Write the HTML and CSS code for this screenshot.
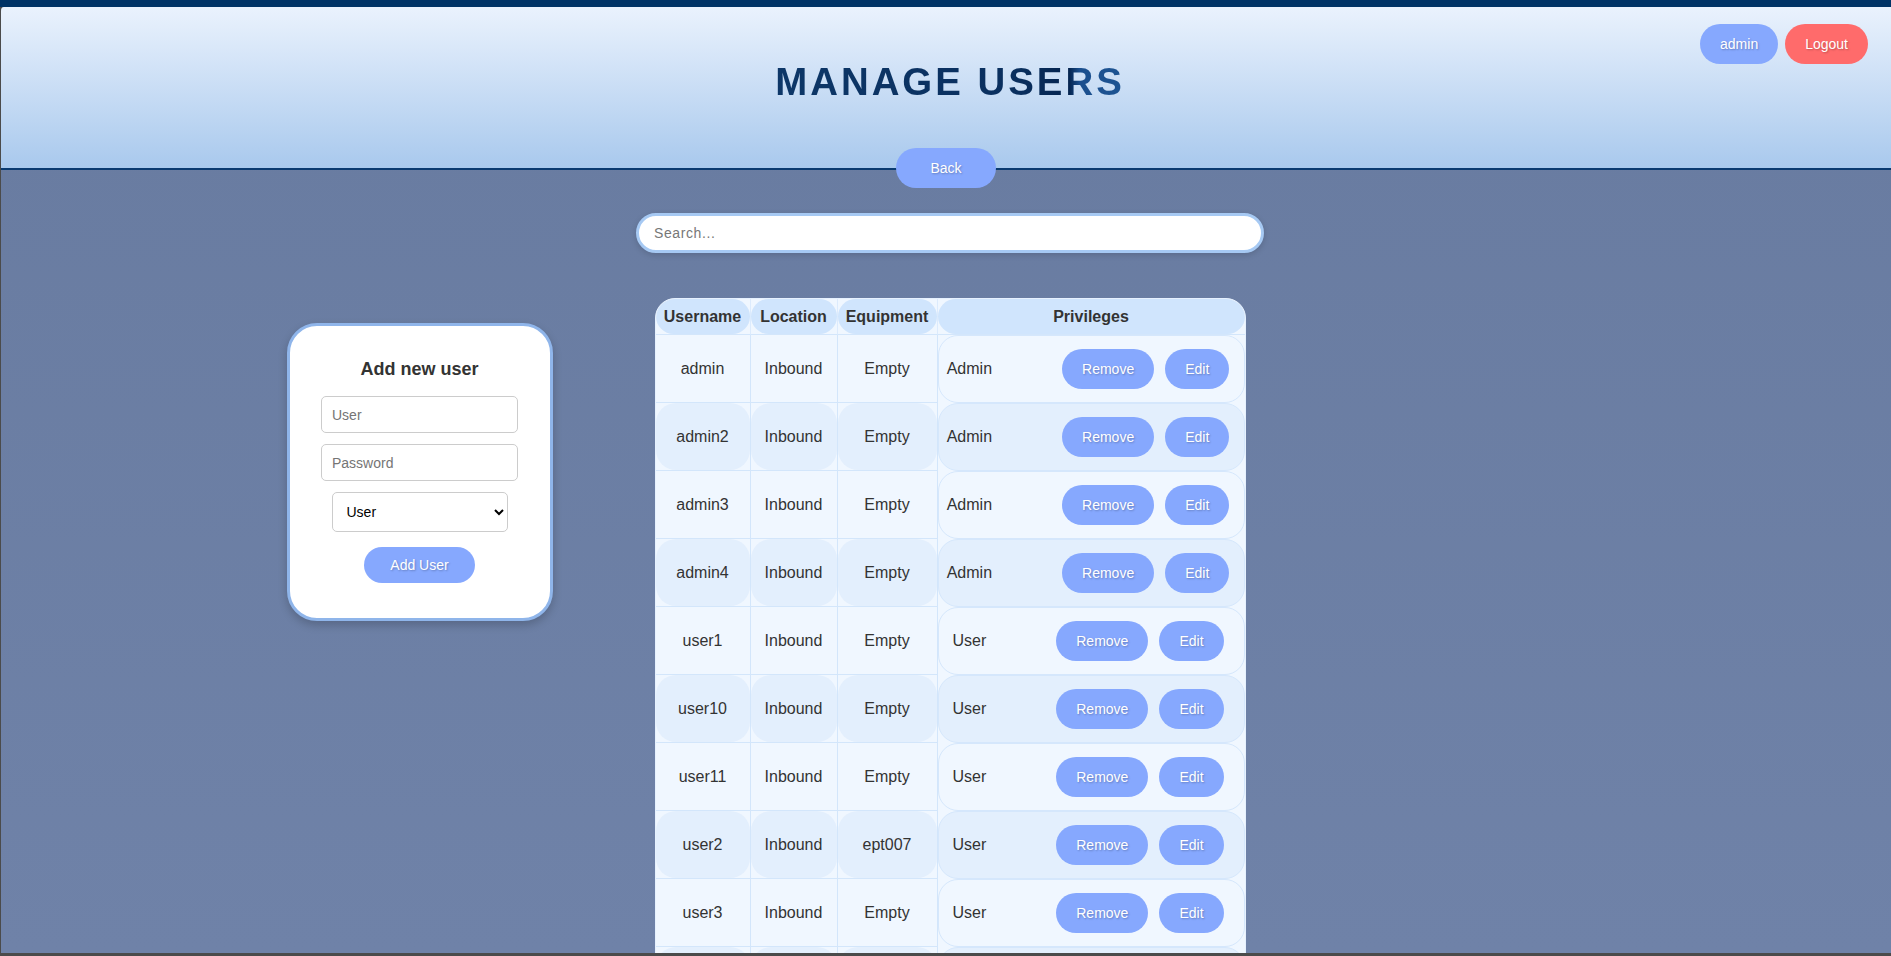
FILE: index.html
```html
<!DOCTYPE html>
<html lang="en">
<head>
<meta charset="utf-8">
<title>Manage Users</title>
<link rel="stylesheet" href="styles.css">
</head>
<body>
<div class="topbar"></div>
<div class="window">
  <header class="header">
    <h1 class="title"><span class="title-text">MANAGE USERS</span></h1>
    <div class="user-menu">
      <button class="pill blue">admin</button>
      <button class="pill red">Logout</button>
    </div>
  </header>
  <div class="back-row"><button class="pill blue back">Back</button></div>
  <div class="search-row"><input class="search" type="text" placeholder="Search..."></div>
  <div class="content">
    <form class="card">
      <h2 class="card-title">Add new user</h2>
      <input class="field" type="text" placeholder="User">
      <input class="field" type="password" placeholder="Password">
      <select class="role-select"><option>User</option><option>Admin</option></select>
      <button type="button" class="pill blue add">Add User</button>
    </form>
    <div class="table-wrap">
      <table class="users">
        <colgroup><col class="c-user"><col class="c-loc"><col class="c-eq"><col></colgroup>
        <thead>
          <tr>
            <th><div class="th-in">Username</div></th>
            <th><div class="th-in">Location</div></th>
            <th><div class="th-in">Equipment</div></th>
            <th><div class="th-in">Privileges</div></th>
          </tr>
        </thead>
        <tbody>
          <tr><td><div class="cell">admin</div></td><td><div class="cell">Inbound</div></td><td><div class="cell">Empty</div></td><td class="priv-td"><div class="priv"><span class="role">Admin</span><button class="pill blue">Remove</button><button class="pill blue edit">Edit</button></div></td></tr>
          <tr><td><div class="cell">admin2</div></td><td><div class="cell">Inbound</div></td><td><div class="cell">Empty</div></td><td class="priv-td"><div class="priv"><span class="role">Admin</span><button class="pill blue">Remove</button><button class="pill blue edit">Edit</button></div></td></tr>
          <tr><td><div class="cell">admin3</div></td><td><div class="cell">Inbound</div></td><td><div class="cell">Empty</div></td><td class="priv-td"><div class="priv"><span class="role">Admin</span><button class="pill blue">Remove</button><button class="pill blue edit">Edit</button></div></td></tr>
          <tr><td><div class="cell">admin4</div></td><td><div class="cell">Inbound</div></td><td><div class="cell">Empty</div></td><td class="priv-td"><div class="priv"><span class="role">Admin</span><button class="pill blue">Remove</button><button class="pill blue edit">Edit</button></div></td></tr>
          <tr><td><div class="cell">user1</div></td><td><div class="cell">Inbound</div></td><td><div class="cell">Empty</div></td><td class="priv-td"><div class="priv"><span class="role">User</span><button class="pill blue">Remove</button><button class="pill blue edit">Edit</button></div></td></tr>
          <tr><td><div class="cell">user10</div></td><td><div class="cell">Inbound</div></td><td><div class="cell">Empty</div></td><td class="priv-td"><div class="priv"><span class="role">User</span><button class="pill blue">Remove</button><button class="pill blue edit">Edit</button></div></td></tr>
          <tr><td><div class="cell">user11</div></td><td><div class="cell">Inbound</div></td><td><div class="cell">Empty</div></td><td class="priv-td"><div class="priv"><span class="role">User</span><button class="pill blue">Remove</button><button class="pill blue edit">Edit</button></div></td></tr>
          <tr><td><div class="cell">user2</div></td><td><div class="cell">Inbound</div></td><td><div class="cell">ept007</div></td><td class="priv-td"><div class="priv"><span class="role">User</span><button class="pill blue">Remove</button><button class="pill blue edit">Edit</button></div></td></tr>
          <tr><td><div class="cell">user3</div></td><td><div class="cell">Inbound</div></td><td><div class="cell">Empty</div></td><td class="priv-td"><div class="priv"><span class="role">User</span><button class="pill blue">Remove</button><button class="pill blue edit">Edit</button></div></td></tr>
          <tr><td><div class="cell"></div></td><td><div class="cell"></div></td><td><div class="cell"></div></td><td class="priv-td"><div class="priv"></div></td></tr>
        </tbody>
      </table>
    </div>
    <div class="spacer"></div>
  </div>
</div>
</body>
</html>
```
FILE: styles.css
```css
html, body {
  margin: 0;
  padding: 0;
}

body {
  font-family: "Liberation Sans", Arial, sans-serif;
  background: #4b4b4b;
  overflow: hidden;
}

.topbar {
  height: 7px;
  background: #003366;
}

.window {
  height: 949px;
  box-sizing: border-box;
  border-left: 1px solid #4b4b4b;
  border-bottom: 3px solid #4b4b4b;
  border-top-left-radius: 4px;
  overflow: hidden;
  background: linear-gradient(#687ba0, #6f82a8);
  display: flex;
  flex-direction: column;
}

.header {
  position: relative;
  flex: none;
  height: 163px;
  box-sizing: border-box;
  padding: 52px 0 0 8px;
  border-bottom: 2px solid #0a3a70;
  background: linear-gradient(#eaf2fd, #a9c9ed);
}

.title {
  margin: 0;
  text-align: center;
  font-size: 38.4px;
  line-height: 46px;
  font-weight: 700;
  letter-spacing: 3px;
}

.title-text {
  display: inline-block;
  background: linear-gradient(90deg, #0d3768 0%, #0a2f5e 70%, #04244f 84%, #1b4f8e 87%, #1d5492 100%);
  -webkit-background-clip: text;
  background-clip: text;
  color: transparent;
}

.user-menu {
  position: absolute;
  top: 17px;
  right: 23px;
  display: flex;
  gap: 7px;
}

.pill {
  border: none;
  border-radius: 20px;
  padding: 12px 20px;
  font-family: "Liberation Sans", Arial, sans-serif;
  font-size: 14px;
  line-height: 16px;
  color: #fff;
  text-shadow: 1px 1px 2px rgba(0, 0, 0, 0.25);
}

.blue {
  background: #86a8fe;
}

.red {
  background: #ff6b6b;
}

.back-row {
  position: relative;
  flex: none;
  display: flex;
  justify-content: center;
  margin-top: -22px;
}

.back {
  width: 100px;
  padding: 12px 0;
}

.search-row {
  flex: none;
  display: flex;
  justify-content: center;
  padding-left: 8px;
  margin-top: 25px;
}

.search {
  width: 628px;
  height: 40px;
  box-sizing: border-box;
  border: 3px solid #a6c9f3;
  border-radius: 20px;
  padding: 0 15px;
  font-family: "Liberation Sans", Arial, sans-serif;
  font-size: 14px;
  letter-spacing: 0.6px;
  background: #fff;
  box-shadow: 0 2px 6px rgba(0, 0, 0, 0.15);
  outline: none;
}

.search::placeholder {
  color: #777;
}

.content {
  flex: none;
  display: grid;
  grid-template-columns: 1fr auto 1fr;
  align-items: start;
  padding-left: 8px;
  margin-top: 45px;
}

/* Add user card */
.card {
  justify-self: end;
  margin: 25px 102px 0 0;
  width: 266px;
  box-sizing: border-box;
  padding: 33px 31px 35px;
  border: 3px solid #8fb5ea;
  border-radius: 30px;
  background: #fff;
  box-shadow: 0 4px 10px rgba(0, 0, 0, 0.2);
  display: flex;
  flex-direction: column;
  align-items: center;
}

.card-title {
  margin: 0 0 16px;
  font-size: 18px;
  line-height: 21px;
  font-weight: 700;
  color: #333;
}

.field {
  width: 197px;
  height: 37px;
  box-sizing: border-box;
  border: 1px solid #ccc;
  border-radius: 5px;
  padding: 0 10px;
  margin: 0 0 11px;
  font-family: "Liberation Sans", Arial, sans-serif;
  font-size: 14px;
  background: #fff;
}

.field::placeholder {
  color: #757575;
}

.role-select {
  width: 176px;
  height: 40px;
  box-sizing: border-box;
  border: 1px solid #ccc;
  border-radius: 5px;
  padding: 0 10px;
  font-family: "Liberation Sans", Arial, sans-serif;
  font-size: 14px;
  color: #000;
  background: #fff;
}

.add {
  margin-top: 15px;
  padding: 10px 26px;
  border-radius: 18px;
}

/* Users table */
.table-wrap {
  width: 591px;
  box-sizing: border-box;
  border: 1px solid #e6f1fe;
  border-radius: 20px;
  overflow: hidden;
  background: #f0f7ff;
}

.users {
  width: 100%;
  border-collapse: separate;
  border-spacing: 0;
  table-layout: fixed;
  color: #333;
  font-size: 16px;
}

.c-user { width: 95px; }
.c-loc { width: 87px; }
.c-eq { width: 100px; }

.users th {
  padding: 0;
  border-right: 1px solid #dcebfd;
  border-bottom: 1px solid #d3e6fb;
}

.users th:last-child {
  border-right: none;
}

.th-in {
  height: 35px;
  display: flex;
  align-items: center;
  justify-content: center;
  background: #d0e5fd;
  border-radius: 18px;
  font-weight: 700;
}

.users td {
  padding: 0;
  border-right: 1px solid #d3e6fb;
  border-bottom: 1px solid #d3e6fb;
}

.users td.priv-td {
  border: none;
}

.cell {
  height: 67px;
  display: flex;
  align-items: center;
  justify-content: center;
  border-radius: 20px;
}

.priv {
  height: 68px;
  box-sizing: border-box;
  border: 1px solid #d5e7fc;
  border-radius: 20px;
  padding-right: 6px;
  display: flex;
  align-items: center;
  justify-content: center;
}

.users tbody tr:nth-child(even) .cell,
.users tbody tr:nth-child(even) .priv {
  background: #e3effd;
}

.role {
  margin-right: 70px;
}

.edit {
  margin-left: 11px;
}
```
